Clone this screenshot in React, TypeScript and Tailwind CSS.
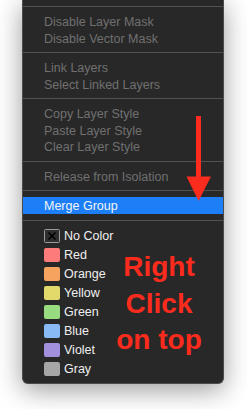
import React from "react";

const Sep = () => <div className="h-px bg-[#525252] my-[6px]" />;

const Row = ({ label, active = false }: { label: string; active?: boolean }) => (
  <div
    className={
      "h-[16.5px] flex items-center pt-[2px] pl-[21px] text-[12.5px] leading-none " +
      (active ? "bg-[#1c7ff7] text-[#f4f4f4]" : "text-[#707070]")
    }
  >
    {label}
  </div>
);

const colors: { name: string; c: string }[] = [
  { name: "Red", c: "#fd7b78" },
  { name: "Orange", c: "#f5a35f" },
  { name: "Yellow", c: "#e2d96b" },
  { name: "Green", c: "#97dd80" },
  { name: "Blue", c: "#88bbf6" },
  { name: "Violet", c: "#a390dd" },
  { name: "Gray", c: "#a6a6a6" },
];

export default function App() {
  return (
    <div
      className="relative w-[247px] h-[409px] overflow-hidden bg-white"
      style={{ fontFamily: '"Liberation Sans", Arial, sans-serif' }}
    >
      <div className="ml-[22px] w-[202px] bg-[#282828] border border-t-0 border-[#4c4c4c] rounded-b-[6px] shadow-[0_6px_26px_rgba(0,0,0,0.4)] pt-[6px] pb-[4px]">
        <div className="h-px bg-[#525252] mb-[6px]" />
        <Row label="Disable Layer Mask" />
        <Row label="Disable Vector Mask" />
        <Sep />
        <Row label="Link Layers" />
        <Row label="Select Linked Layers" />
        <Sep />
        <Row label="Copy Layer Style" />
        <Row label="Paste Layer Style" />
        <Row label="Clear Layer Style" />
        <Sep />
        <Row label="Release from Isolation" />
        <Sep />
        <Row label="Merge Group" active />
        <div className="h-px bg-[#525252] mt-[6px] mb-[6px]" />
        <div className="flex flex-col">
          <div className="h-[19px] flex items-center pl-[21px] gap-[4px] text-[12.5px] leading-none text-[#efefef]">
            <svg width="16" height="14" viewBox="0 0 16 14" className="shrink-0">
              <rect x="0.5" y="0.5" width="15" height="13" rx="1" fill="#2e2e2e" stroke="#9b9b9b" />
              <path d="M4.5 3.5 L11.5 10.5 M11.5 3.5 L4.5 10.5" stroke="#000" strokeWidth="1.6" />
            </svg>
            <span>No Color</span>
          </div>
          {colors.map((x) => (
            <div
              key={x.name}
              className="h-[19px] flex items-center pl-[21px] gap-[4px] text-[12.5px] leading-none text-[#efefef]"
            >
              <div className="w-[16px] h-[14px] rounded-[2px] shrink-0" style={{ background: x.c }} />
              <span>{x.name}</span>
            </div>
          ))}
        </div>
      </div>

      <svg className="absolute left-0 top-0" width="247" height="409" viewBox="0 0 247 409">
        <rect x="196" y="116" width="5" height="62" fill="#fb2b1d" />
        <polygon points="186.5,176.5 211,176.5 198.6,201" fill="#fb2b1d" />
      </svg>

      <div className="absolute left-[100px] top-[249px] w-[118px] text-center font-bold text-[28px] leading-[36.5px] text-[#fb2b1d]">
        <div>Right</div>
        <div>Click</div>
        <div>on top</div>
      </div>
    </div>
  );
}
